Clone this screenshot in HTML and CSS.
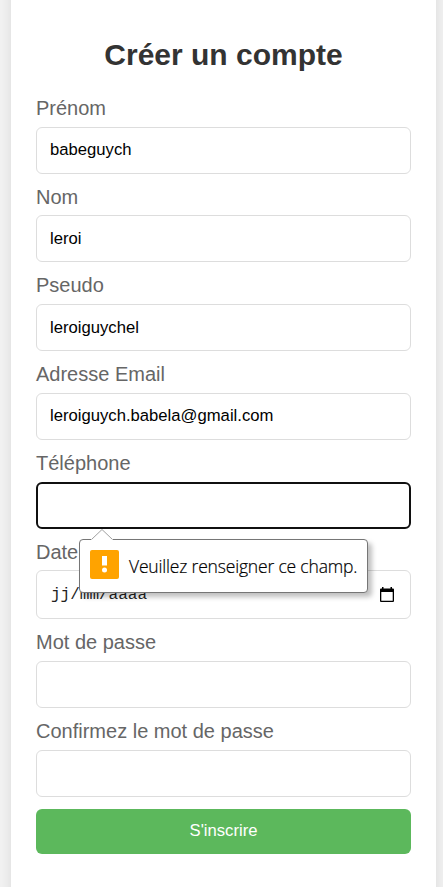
FILE: index.html
```html
<!DOCTYPE html>
<html lang="fr">
<head>
<meta charset="utf-8">
<title>Créer un compte</title>
<link rel="stylesheet" href="styles.css">
</head>
<body>
<form class="card" novalidate>
  <h1 class="title">Créer un compte</h1>
  <div class="field"><label for="prenom">Prénom</label><input id="prenom" type="text" value="babeguych"></div>
  <div class="field"><label for="nom">Nom</label><input id="nom" type="text" value="leroi"></div>
  <div class="field"><label for="pseudo">Pseudo</label><input id="pseudo" type="text" value="leroiguychel"></div>
  <div class="field"><label for="email">Adresse Email</label><input id="email" type="email" value="leroiguych.babela@gmail.com"></div>
  <div class="field">
    <label for="tel">Téléphone</label><input id="tel" class="focused" type="tel">
    <div class="bubble" role="alert">
      <svg class="arrow" width="22" height="12" viewBox="0 0 22 12"><path d="M0 12V10.500L11 .5L22 10.500V12Z" fill="#fff"/><path d="M.5 10.500L11 .5L21.500 10.500" fill="none" stroke="#a0a0a0"/></svg>
      <svg class="warn" width="29" height="29" viewBox="0 0 29 29"><rect width="29" height="29" rx="2" fill="#ffa300"/><path d="M12 6h5v9.500h-5z" fill="#fff"/><circle cx="14.500" cy="20" r="2.500" fill="#fff"/></svg>
      <span class="message">Veuillez renseigner ce champ.</span>
    </div>
  </div>
  <div class="field">
    <span class="label">Date</span>
    <div class="date"><span>jj/mm/aaaa</span>
      <svg width="14" height="15" viewBox="0 0 14 15"><path d="M2 0h1.500v1.500h7V0H12v1.500h1q1 0 1 1V14q0 1-1 1H1q-1 0-1-1V2.500q0-1 1-1h1zM1.300 5v8.700h11.400V5z" fill="#000" fill-rule="evenodd"/></svg>
    </div>
  </div>
  <div class="field"><label for="mdp">Mot de passe</label><input id="mdp" type="password"></div>
  <div class="field"><label for="mdp2">Confirmez le mot de passe</label><input id="mdp2" type="password"></div>
  <button type="button">S'inscrire</button>
</form>
</body>
</html>
```
FILE: styles.css
```css
* { box-sizing: border-box; }
html { height: 100%; overflow: hidden; }
body {
  height: 887px;
  margin: 0;
  padding: 0 7px 0 11px;
  overflow: hidden;
  background: #f2f2f2;
  font-family: "Liberation Sans", Arial, sans-serif;
}
.card {
  height: 940px;
  margin-top: -20px;
  padding: 57px 25px 0;
  background: #fff;
  box-shadow: 0 0 12.5px rgba(0, 0, 0, .1);
}
.title {
  margin: 0 0 25px;
  font-size: 30px;
  line-height: 35px;
  text-align: center;
  color: #333;
}
.field {
  position: relative;
  margin-bottom: 12.1px;
}
label, .label {
  display: block;
  height: 29.650px;
  font-size: 20px;
  line-height: 23px;
  color: #666;
}
input, .date {
  display: block;
  width: 100%;
  height: 47px;
  padding: 0 13px;
  border: 1px solid #ddd;
  border-radius: 6px;
  background: #fff;
  font: 16.670px "Liberation Sans", Arial, sans-serif;
  color: #000;
  outline: 0;
}
.focused { border: 2px solid #101010; }
.date {
  display: flex;
  align-items: center;
  justify-content: space-between;
  height: 49px;
  padding: 0 16.500px 0 14px;
  font: 16px "Liberation Mono", monospace;
  color: #222;
}
.bubble {
  position: absolute;
  z-index: 2;
  left: 43px;
  top: 86.750px;
  display: flex;
  align-items: center;
  gap: 10px;
  width: 289px;
  height: 54px;
  padding: 0 10px;
  border: 1px solid #767676;
  border-radius: 4px;
  background: #fff;
  box-shadow: 4px 4px 5px rgba(0, 0, 0, .25);
}
.arrow { position: absolute; left: 11px; top: -11px; }
.warn { flex: none; margin-top: -3px; }
.message {
  font: 300 17.500px/24px "Open Sans", "Noto Sans", sans-serif;
  letter-spacing: -.18px;
  color: #000;
  -webkit-text-stroke: .2px #000;
  white-space: nowrap;
}
button {
  display: block;
  width: 100%;
  height: 45px;
  border: 0;
  border-radius: 6px;
  background: #5cb85c;
  font: 16.670px "Liberation Sans", Arial, sans-serif;
  color: #fff;
}
```
